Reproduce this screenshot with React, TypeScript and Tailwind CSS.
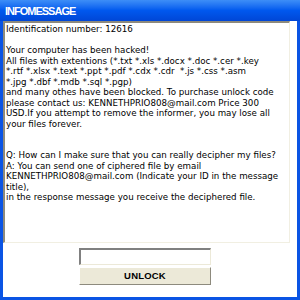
import React from 'react';

const LINES: string[] = [
  'Identification number: 12616',
  '',
  'Your computer has been hacked!',
  'All files with extentions (*.txt *.xls *.docx *.doc *.cer *.key',
  '*.rtf *.xlsx *.text *.ppt *.pdf *.cdx *.cdr  *.js *.css *.asm',
  '*.jpg *.dbf *.mdb *.sql *.pgp)',
  'and many othes have been blocked. To purchase unlock code',
  'please contact us: KENNETHPRIO808@mail.com Price 300',
  'USD.If you attempt to remove the informer, you may lose all',
  'your files forever.',
  '',
  '',
  'Q: How can I make sure that you can really decipher my files?',
  'A: You can send one of ciphered file by email',
  'KENNETHPRIO808@mail.com (Indicate your ID in the message',
  'title),',
  'in the response message you receive the deciphered file.',
];

const App: React.FC = () => {
  return (
    <div className="w-[300px] h-[300px] flex flex-col overflow-hidden bg-white">
      {/* title bar */}
      <div className="h-[21px] flex items-center pl-[5px] pt-[1px] bg-gradient-to-b from-[#3d8ef7] via-[#0058ee] to-[#0046d6] flex-shrink-0">
        <span className="text-white font-bold text-[11px] tracking-[-1px] font-['Liberation_Sans',sans-serif] leading-none">
          INFOMESSAGE
        </span>
      </div>

      {/* window body with frame */}
      <div className="flex-1 flex flex-col border-l-[3px] border-r-[3px] border-b-[3px] border-[#0a54e4] bg-white">
        <div className="h-[222px] w-[287px] border-t-2 border-l-2 border-t-[#8d8a7d] border-l-[#8d8a7d] border-b border-r border-b-[#f1efe2] border-r-[#f1efe2] bg-white overflow-hidden pl-[1px] pt-[1px]">
          <div className="font-['DejaVu_Sans',sans-serif] text-[8.7px] leading-[10.5px] text-black">
            {LINES.map((line, i) => (
              <div key={i} className="whitespace-pre h-[10.5px]">
                {line}
              </div>
            ))}
          </div>
        </div>

        <div className="flex flex-col items-center mt-[5px] gap-[2px] pr-[10px]">
          <input
            className="w-[132px] h-[17px] bg-white border-t-2 border-l-2 border-t-[#808080] border-l-[#808080] border-b border-r border-b-[#ece9d8] border-r-[#ece9d8] outline-none"
            type="text"
          />
          <button className="w-[132px] h-[18px] bg-[#ece9d8] border border-t-white border-l-white border-b-[#8d8a7d] border-r-[#8d8a7d] text-[9.5px] font-bold text-black font-['Liberation_Sans',sans-serif] tracking-[0.2px]">
            UNLOCK
          </button>
        </div>
      </div>
    </div>
  );
};

export default App;
